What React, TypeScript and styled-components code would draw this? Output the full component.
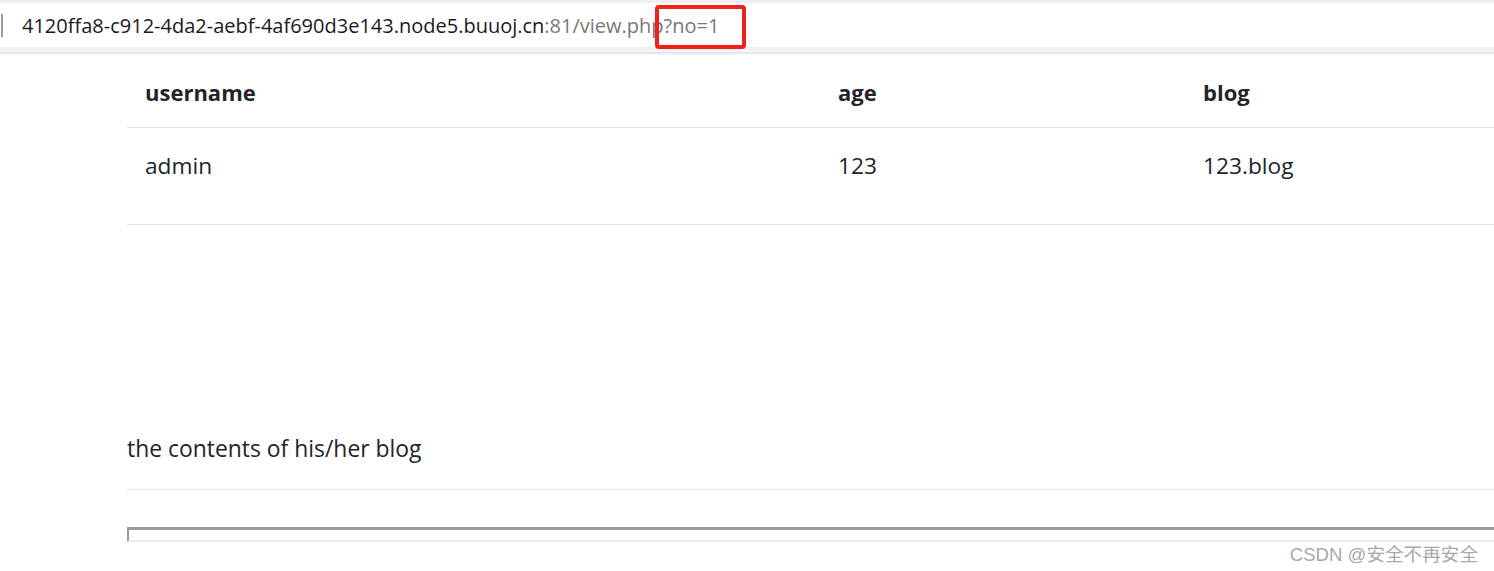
import React from "react";
import styled, { createGlobalStyle } from "styled-components";

const Global = createGlobalStyle`
  html, body { margin: 0; padding: 0; background: #fff; }
  body { font-family: "Open Sans", "Noto Sans", Arial, sans-serif; color: #212529; overflow: hidden; }
`;

const Page = styled.div`
  position: relative;
  width: 1494px;
  height: 571px;
  overflow: hidden;
  background: #fff;
`;

const AddressBar = styled.div`
  position: relative;
  height: 44px;
  border-top: 3px solid #efefef;
  border-bottom: 3px solid #f0f0f0;
  display: flex;
  align-items: center;
  padding-left: 22px;
  font-size: 20px;
`;

const BarEdge = styled.div`
  height: 4px;
  background: linear-gradient(#f6f6f8, #f6f6f8 50%, #e6e6ee 50%);
`;

const Caret = styled.span`
  position: absolute;
  left: 1px;
  top: 11px;
  width: 2px;
  height: 23px;
  background: #9a9a9a;
`;

const Host = styled.span`
  color: #1a1a1a;
`;

const PathPart = styled.span`
  color: #787878;
`;

const Highlight = styled.span`
  position: absolute;
  left: 655px;
  top: 2px;
  width: 83px;
  height: 36px;
  border: 4px solid #f2201a;
  border-radius: 4px;
`;

const Content = styled.main`
  margin-left: 127px;
  font-size: 22.9px;
`;

const Table = styled.div`
  display: grid;
  grid-template-columns: 693px 365px 1fr;
`;

const Cell = styled.div<{ $head?: boolean }>`
  padding: ${(p) => (p.$head ? "23px 18px 20px" : "23px 18px 43px")};
  line-height: 30px;
  font-size: ${(p) => (p.$head ? "22px" : "22.7px")};
  font-weight: ${(p) => (p.$head ? 700 : 400)};
  border-bottom: 1px solid #dee2e6;
`;

const Blog = styled.div`
  margin-top: 209px;
  padding-bottom: 25px;
  line-height: 30px;
  border-bottom: 1px solid #e4e4e4;
`;

const Frame = styled.div`
  margin-top: 37px;
  height: 10px;
  border-top: 3px solid #9a9a9a;
  border-left: 2px solid #9a9a9a;
  border-bottom: 2px solid #ececec;
`;

const Watermark = styled.div`
  position: absolute;
  right: 16px;
  top: 539px;
  font-family: "Liberation Sans", "Noto Sans CJK SC", sans-serif;
  font-size: 18.6px;
  color: #a8a8a8;
`;

export default function App() {
  return (
    <Page>
      <Global />
      <AddressBar>
        <Caret />
        <Host>4120ffa8-c912-4da2-aebf-4af690d3e143.node5.buuoj.cn</Host>
        <PathPart>:81/view.php?no=1</PathPart>
        <Highlight />
      </AddressBar>
      <BarEdge />
      <Content>
        <Table>
          <Cell $head>username</Cell>
          <Cell $head>age</Cell>
          <Cell $head>blog</Cell>
          <Cell>admin</Cell>
          <Cell>123</Cell>
          <Cell>123.blog</Cell>
        </Table>
        <Blog>the contents of his/her blog</Blog>
        <Frame />
      </Content>
      <Watermark>CSDN @安全不再安全</Watermark>
    </Page>
  );
}
